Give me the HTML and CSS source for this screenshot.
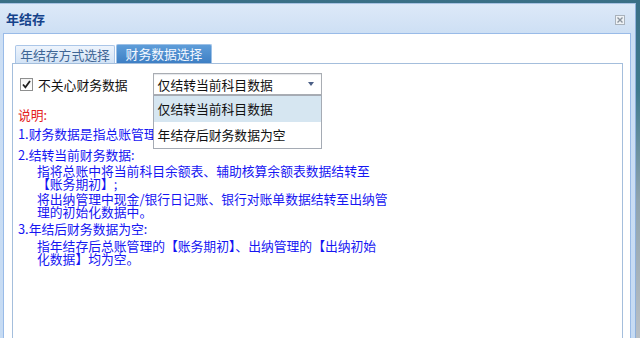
FILE: index.html
```html
<!DOCTYPE html>
<html lang="zh-CN">
<head>
<meta charset="utf-8">
<title>年结存</title>
<link rel="stylesheet" href="styles.css">
</head>
<body>
<div class="window">
  <div class="header">
    <span class="title">年结存</span>
    <span class="close">
      <svg width="10" height="10" viewBox="0 0 10 10"><rect x="0.5" y="0.5" width="9" height="9" fill="#eef2f6" stroke="#a9b2bc"/><path d="M2.5 2.5 L7.5 7.5 M7.5 2.5 L2.5 7.5" stroke="#8b949e" stroke-width="1.4"/></svg>
    </span>
  </div>
  <div class="body">
    <div class="tabs">
      <div class="tab">年结存方式选择</div>
      <div class="tab active">财务数据选择</div>
    </div>
    <div class="panel">
      <div class="row">
        <span class="check">
          <svg width="11" height="11" viewBox="0 0 11 11"><path d="M2 5.5 L4.4 8.3 L9 2" fill="none" stroke="#1e1e1e" stroke-width="1.8"/></svg>
        </span>
        <span class="label">不关心财务数据</span>
        <div class="select">
          <span class="select-text">仅结转当前科目数据</span>
          <span class="arrow"></span>
          <ul class="list">
            <li class="item selected">仅结转当前科目数据</li>
            <li class="item">年结存后财务数据为空</li>
          </ul>
        </div>
      </div>
      <div class="notes">
        <p class="red n0">说明:</p>
        <p class="n1">1.财务数据是指总账管理</p>
        <p class="n2">2.结转当前财务数据:</p>
        <p class="sub n3">指将总账中将当前科目余额表、辅助核算余额表数据结转至<br>【账务期初】;</p>
        <p class="sub n4">将出纳管理中现金/银行日记账、银行对账单数据结转至出纳管<br>理的初始化数据中。</p>
        <p class="n5">3.年结后财务数据为空:</p>
        <p class="sub n6">指年结存后总账管理的【账务期初】、出纳管理的【出纳初始<br>化数据】均为空。</p>
      </div>
    </div>
  </div>
</div>
</body>
</html>
```
FILE: styles.css
```css
* { box-sizing: border-box; }
html, body { margin: 0; padding: 0; }
body {
  width: 640px;
  height: 338px;
  overflow: hidden;
  background: linear-gradient(#3a6f86 0, #3f7a8e 90px, #8fa3ae 200px, #b9bfc4 338px);
  font-family: "Noto Sans CJK SC", "Noto Sans", sans-serif;
  font-size: 12.8px;
}
.window {
  margin-top: 3px;
  width: 636px;
  height: 340px;
  background: linear-gradient(#dde9f8, #cddff4 30px, #c6dbf3);
  border: 1px solid #8fb1dc;
  border-left: 0;
  border-top-color: #a7c2e3;
  padding: 0 4px 0 3px;
  display: flex;
  flex-direction: column;
  overflow: hidden;
}
.header {
  flex: 0 0 29px;
  height: 29px;
  display: flex;
  align-items: center;
  justify-content: space-between;
  padding: 0 6px 0 3px;
}
.title {
  font-weight: bold;
  font-size: 13px;
  color: #15428b;
}
.close { display: flex; margin-top: 2px; }
.body {
  flex: 1 0 auto;
  background: #fff;
  border: 1px solid #99bbe8;
  padding: 10px 7px 0 8px;
}
.tabs {
  display: flex;
  align-items: flex-end;
  padding-left: 3px;
  gap: 1px;
  height: 19px;
}
.tab {
  width: 100px;
  height: 18px;
  line-height: 17px;
  text-align: center;
  color: #3e6595;
  background: linear-gradient(#eef4fc, #d2e3f6);
  border: 1px solid #abc6e8;
  border-bottom: 0;
  border-radius: 2px 2px 0 0;
}
.tab.active {
  width: 96px;
  height: 19px;
  line-height: 18px;
  color: #f4f8ff;
  background: linear-gradient(#5e9dd9, #3e7fc4);
  border-color: #9cc0e6;
}
.panel {
  height: 290px;
  border: 1px solid #a4bedc;
  padding: 0 0 0 5px;
}
.row {
  display: flex;
  align-items: center;
  height: 22px;
  margin-top: 9px;
}
.check {
  width: 13px;
  height: 13px;
  margin-left: 2px;
  border: 1px solid #8e8f8f;
  background: linear-gradient(#f4f4f4, #ffffff);
  display: flex;
  align-items: center;
  justify-content: center;
}
.label {
  margin-left: 5px;
  margin-right: 25px;
  color: #111;
}
.select {
  position: relative;
  width: 169px;
  height: 22px;
  border: 1px solid #a9adb3;
  box-shadow: inset 0 1px 1px #e4e6ea;
  background: #fff;
  display: flex;
  align-items: center;
  padding-left: 4px;
  color: #111;
}
.select-text { flex: 1; }
.arrow {
  width: 0;
  height: 0;
  margin-right: 7px;
  border-left: 3.5px solid transparent;
  border-right: 3.5px solid transparent;
  border-top: 4px solid #4b5f86;
}
.list {
  position: absolute;
  top: 21px;
  left: -1px;
  width: 169px;
  margin: 0;
  padding: 0;
  list-style: none;
  background: #fff;
  border: 1px solid #a5abb4;
  z-index: 2;
}
.item {
  height: 26px;
  line-height: 26px;
  padding-left: 4px;
  color: #111;
}
.item.selected { background: #d6e6f1; }
.notes { color: #1616f2; }
.notes p {
  margin: 0;
  line-height: 13px;
  white-space: nowrap;
}
.notes .red { color: #e42020; }
.notes .sub { margin-left: 19px; }
.n0 { margin-top: 13px !important; }
.n1 { margin-top: 6px !important; }
.n2 { margin-top: 8px !important; }
.n3 { margin-top: 3px !important; }
.n4 { margin-top: 2px !important; }
.n5 { margin-top: 4px !important; }
.n6 { margin-top: 4px !important; }
```
